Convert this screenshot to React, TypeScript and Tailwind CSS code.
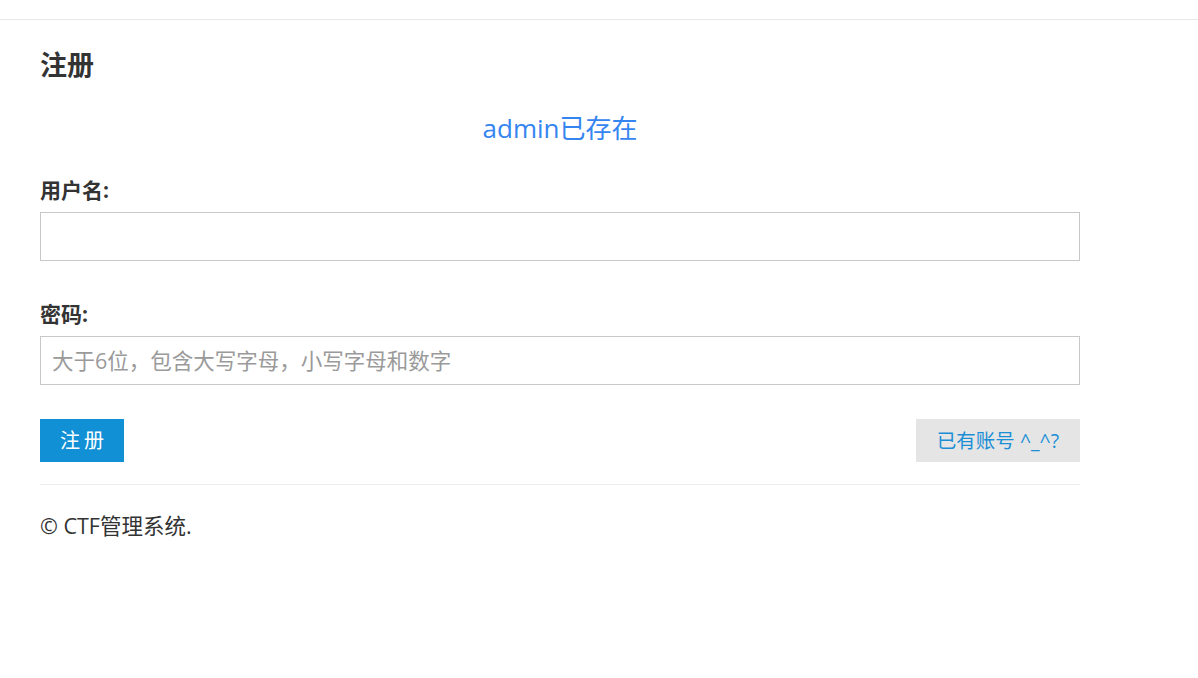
import React from "react";

export default function App() {
  const font = { fontFamily: '"Open Sans", "Noto Sans CJK SC", sans-serif' };
  return (
    <div className="min-h-[678px] bg-white text-[#333]" style={font}>
      <div className="h-[20px] border-b border-[#e8e8e8]" />
      <div className="w-[1040px] ml-[40px]">
        <h1 className="text-[27px] font-bold leading-[32px] mt-[29px] text-[#333]">注册</h1>
        <div className="text-center text-[26px] leading-[36px] text-[#3585f0] mt-[29px]">admin已存在</div>
        <div className="mt-[29px]">
          <label className="block text-[21px] font-bold leading-[30px] mb-[7px]">用户名:</label>
          <input className="block w-full h-[49px] border border-[#c8c8c8] px-[11px] text-[21px] outline-none" />
        </div>
        <div className="mt-[38px]">
          <label className="block text-[21px] font-bold leading-[30px] mb-[7px]">密码:</label>
          <input
            className="block w-full h-[49px] border border-[#c8c8c8] px-[11px] text-[21.5px] outline-none placeholder:text-[#9a9a9a]"
            placeholder="大于6位，包含大写字母，小写字母和数字"
          />
        </div>
        <div className="flex justify-between mt-[34px]">
          <button className="w-[84px] h-[43px] bg-[#1190d5] text-white text-[20px] tracking-[4px] pl-[4px]">注册</button>
          <button className="w-[164px] h-[43px] bg-[#e5e5e5] text-[#1a8fd6] text-[19.5px]">已有账号 ^_^?</button>
        </div>
        <div className="border-t border-[#eeeeee] mt-[22px]" />
        <div className="text-[21.5px] leading-[30px] mt-[26px] text-[#333]">© CTF管理系统.</div>
      </div>
    </div>
  );
}
